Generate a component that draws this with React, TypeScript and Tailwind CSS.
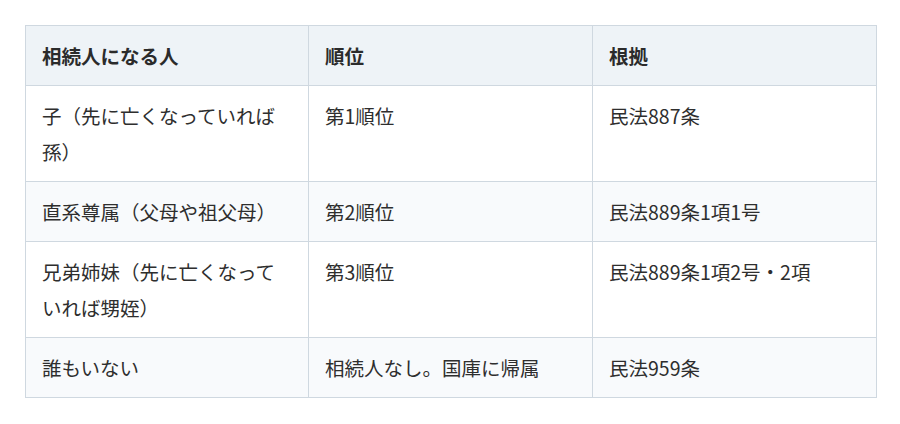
const rows: { who: React.ReactNode; rank: string; basis: string }[] = [
  {
    who: (
      <>
        子（先に亡くなっていれば
        <br />
        孫）
      </>
    ),
    rank: "第1順位",
    basis: "民法887条",
  },
  { who: "直系尊属（父母や祖父母）", rank: "第2順位", basis: "民法889条1項1号" },
  {
    who: (
      <>
        兄弟姉妹（先に亡くなって
        <br />
        いれば甥姪）
      </>
    ),
    rank: "第3順位",
    basis: "民法889条1項2号・2項",
  },
  { who: "誰もいない", rank: "相続人なし。国庫に帰属", basis: "民法959条" },
];

export default function App() {
  return (
    <div
      className="h-[424px] w-[900px] bg-white pl-[25px] pt-[25px] text-[#2e2e2e]"
      style={{ fontFamily: '"Noto Sans CJK JP", "Noto Sans", sans-serif' }}
    >
      <table className="w-[851px] table-fixed border-collapse text-[19.5px] leading-[36px]">
        <colgroup>
          <col className="w-[283px]" />
          <col className="w-[284px]" />
          <col className="w-[284px]" />
        </colgroup>
        <thead>
          <tr className="bg-[#eef3f7]">
            {["相続人になる人", "順位", "根拠"].map((h) => (
              <th
                key={h}
                className="border border-[#cfd8e0] px-4 py-[11.5px] text-left font-bold text-[#2b2b2b]"
              >
                {h}
              </th>
            ))}
          </tr>
        </thead>
        <tbody>
          {rows.map((r, i) => (
            <tr key={i} className={i % 2 === 1 ? "bg-[#f8fafc]" : "bg-white"}>
              <td className="border border-[#cfd8e0] px-4 py-[11.5px] align-top">
                {r.who}
              </td>
              <td className="border border-[#cfd8e0] px-4 py-[11.5px] align-top">
                {r.rank}
              </td>
              <td className="border border-[#cfd8e0] px-4 py-[11.5px] align-top">
                {r.basis}
              </td>
            </tr>
          ))}
        </tbody>
      </table>
    </div>
  );
}
